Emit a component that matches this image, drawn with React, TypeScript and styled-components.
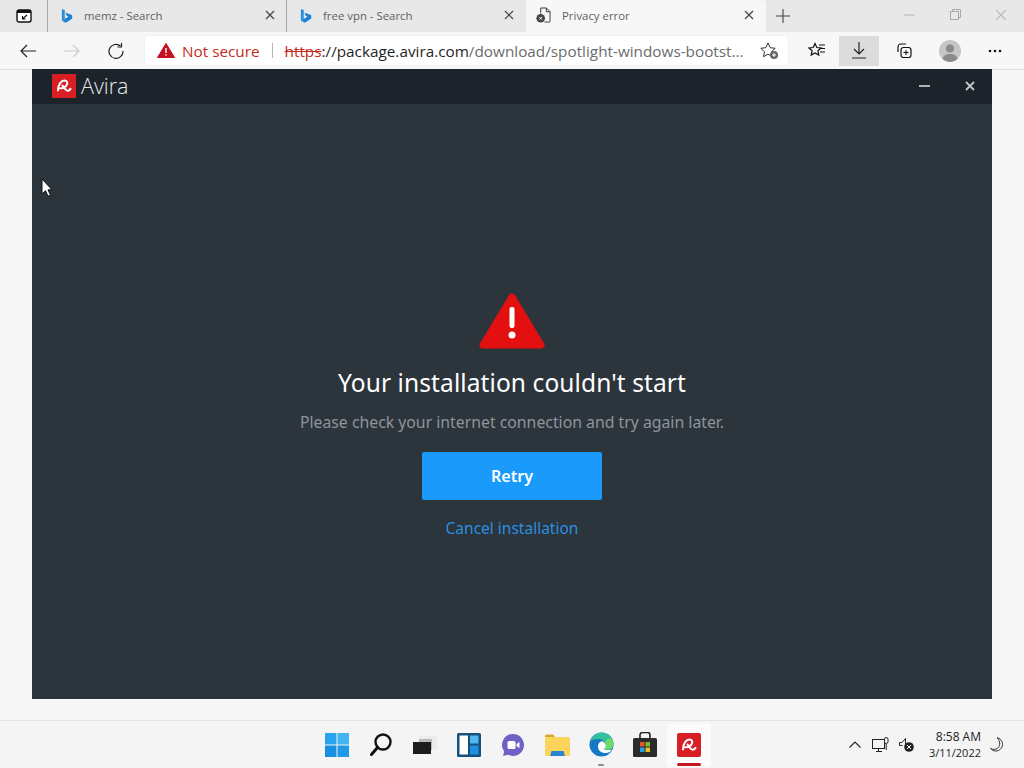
import React from "react";
import styled, { createGlobalStyle } from "styled-components";

const Global = createGlobalStyle`
  html, body { margin: 0; padding: 0; background: #f7f7f7; overflow: hidden; }
  * { box-sizing: border-box; }
`;

const Page = styled.div`
  position: relative;
  width: 1024px;
  height: 768px;
  display: flex;
  flex-direction: column;
  font-family: "Open Sans", "Liberation Sans", sans-serif;
  overflow: hidden;
`;

const TabStrip = styled.div`
  height: 32px;
  background: #e8e8e8;
  display: flex;
  align-items: stretch;
  flex-shrink: 0;
`;
const TabAction = styled.div`
  width: 47px;
  display: flex;
  align-items: center;
  padding: 0 0 1px 16px;
`;
const Tab = styled.div<{ $active?: boolean; $w: number }>`
  width: ${(p) => p.$w}px;
  display: flex;
  align-items: center;
  padding: 0 ${(p) => (p.$active ? 12 : 11)}px 2px ${(p) => (p.$active ? 10 : 13)}px;
  background: ${(p) => (p.$active ? "#f7f7f7" : "transparent")};
  border-left: 1px solid ${(p) => (p.$active ? "transparent" : "#a8a8a8")};
  background-clip: padding-box;
  border-radius: ${(p) => (p.$active ? "3px 3px 0 0" : "0")};
`;
const TabTitle = styled.span`
  flex: 1;
  margin-left: 11px;
  font-size: 11.4px;
  color: #5f5f5f;
  white-space: nowrap;
`;
const NewTab = styled.div`
  width: 34px;
  display: flex;
  align-items: center;
  justify-content: center;
  padding-bottom: 1px;
`;
const WindowControls = styled.div`
  margin-left: auto;
  display: flex;
  align-items: center;
  padding-bottom: 3px;
`;
const WindowButton = styled.div`
  width: 46px;
  display: flex;
  align-items: center;
  justify-content: center;
`;

const Toolbar = styled.div`
  height: 38px;
  background: #f7f7f7;
  display: flex;
  align-items: center;
  flex-shrink: 0;
  border-bottom: 1px solid #dedede;
  padding-left: 6px;
`;
const NavButton = styled.div<{ $w?: number; $on?: boolean }>`
  width: ${(p) => p.$w ?? 44}px;
  height: 30px;
  display: flex;
  align-items: center;
  justify-content: center;
  flex-shrink: 0;
  background: ${(p) => (p.$on ? "#dcdcdc" : "transparent")};
`;
const Address = styled.div`
  width: 643px;
  height: 29px;
  margin-left: 7px;
  margin-right: 7px;
  background: #fff;
  border-radius: 2px;
  display: flex;
  align-items: center;
  padding-left: 12px;
  font-size: 15.3px;
  white-space: nowrap;
  box-shadow: 0 0 1px #c8c8c8;
  flex-shrink: 0;
`;
const NotSecure = styled.span`
  color: #c42b1c;
  margin-left: 7px;
`;
const Divider = styled.span`
  width: 1px;
  height: 15px;
  background: #b5b5b5;
  margin: 0 12px;
`;
const Scheme = styled.span`
  color: #c42b1c;
  text-decoration: line-through;
`;
const Host = styled.span`
  color: #1f1f1f;
`;
const Path = styled.span`
  color: #6b6b6b;
  flex: 1;
`;
const AddFav = styled.div`
  width: 38px;
  display: flex;
  justify-content: center;
`;

const Content = styled.div`
  flex: 1;
  background: #f7f7f7;
  padding: 0 32px 21px;
  display: flex;
  min-height: 0;
`;
const AppWindow = styled.div`
  flex: 1;
  margin-top: -1px;
  background: #2c343c;
  display: flex;
  flex-direction: column;
  position: relative;
  z-index: 1;
  font-family: "Noto Sans", "Open Sans", sans-serif;
`;
const AppHeader = styled.div`
  height: 35px;
  background: #1c232a;
  display: flex;
  align-items: center;
  padding: 0 17px 2px 20px;
  flex-shrink: 0;
`;
const Brand = styled.span`
  color: #e8eaec;
  font-size: 21.5px;
  margin-left: 5px;
  flex: 1;
  font-family: "Open Sans", sans-serif;
  font-weight: 300;
`;
const HeaderControls = styled.div`
  display: flex;
  align-items: center;
  gap: 35px;
`;
const AppBody = styled.div`
  flex: 1;
  display: flex;
  flex-direction: column;
  align-items: center;
  padding-top: 189px;
`;
const Title = styled.h1`
  margin: 15px 0 0;
  font-size: 24.5px;
  line-height: 34px;
  font-weight: 400;
  color: #fff;
  letter-spacing: 0.1px;
`;
const Subtitle = styled.p`
  margin: 10px 0 0;
  font-size: 15.8px;
  line-height: 24px;
  color: #8f959b;
`;
const RetryButton = styled.button`
  margin-top: 18px;
  width: 180px;
  height: 48px;
  border: 0;
  border-radius: 2px;
  background: #1a9bfb;
  color: #fff;
  font: 600 16px "Noto Sans", sans-serif;
`;
const CancelLink = styled.a`
  margin-top: 16px;
  font-size: 15.5px;
  line-height: 24px;
  color: #2a8fe0;
`;

const Taskbar = styled.div`
  height: 48px;
  background: #f4f4f4;
  border-top: 1px solid #e4e4e4;
  display: grid;
  grid-template-columns: 1fr auto 1fr;
  align-items: center;
  flex-shrink: 0;
`;
const TaskIcons = styled.div`
  grid-column: 2;
  display: flex;
  padding-left: 2px;
`;
const TaskIcon = styled.div<{ $on?: boolean }>`
  width: 44px;
  height: 44px;
  display: flex;
  align-items: center;
  justify-content: center;
  position: relative;
  background: ${(p) => (p.$on ? "#fbfbfb" : "transparent")};
  border-radius: 3px;
`;
const RunningBar = styled.span`
  position: absolute;
  left: 10px;
  right: 10px;
  bottom: 1px;
  height: 3px;
  border-radius: 2px;
  background: #c4161c;
`;
const RunningDot = styled.span`
  position: absolute;
  left: 19px;
  width: 6px;
  bottom: 1px;
  height: 2px;
  border-radius: 1px;
  background: #8c8c8c;
`;
const Tray = styled.div`
  grid-column: 3;
  display: flex;
  align-items: center;
  justify-content: flex-end;
  padding-right: 20px;
`;
const TrayIcon = styled.div`
  width: 26px;
  display: flex;
  justify-content: center;
`;
const Clock = styled.div`
  text-align: right;
  line-height: 16px;
  color: #222;
  margin: 0 9px;
`;
const ClockTime = styled.div`
  font-size: 12px;
`;
const ClockDate = styled.div`
  font-size: 11px;
`;
const Cursor = styled.svg`
  position: absolute;
  left: 41px;
  top: 178px;
  z-index: 2;
`;

const Bing = () => (
  <svg width="12" height="17" viewBox="0 0 14 17">
    <path d="M1 1l3.400 1.200v10.400l4.600-2.700-2.200-1-1.400-3.500 7.600 2.700v3.800l-6 4.100-2 .9L1 14.400z" fill="#2b8fdc" />
    <path d="M4.400 12.600l4.600-2.700-2.200-1-1.400-3.500 7.600 2.700v3.800L6.600 16l-2.200-.3z" fill="#1b7ad0" opacity=".7" />
  </svg>
);
const Close = ({ s = 10, c = "#444", w = 1.2 }: { s?: number; c?: string; w?: number }) => (
  <svg width={s} height={s} viewBox="0 0 10 10">
    <path d="M1 1l8 8M9 1l-8 8" stroke={c} strokeWidth={w} fill="none" />
  </svg>
);
const AviraMark = ({ s, bar }: { s: number; bar?: boolean }) => (
  <svg width={s} height={s} viewBox="0 0 24 24">
    <rect width="24" height="24" rx={bar ? 2 : 1} fill="#d91f26" />
    <path
      d="M6 16.500C6 10 9.500 6.500 12.500 6.500c2.600 0 3.500 2.300 2.200 4.600-1.400 2.300-4.200 3.500-6.600 3.200M10.500 11.500c1.600 2.600 3.600 5.200 5.300 5.200 1.200 0 2-.7 2.700-1.800"
      stroke="#fff"
      strokeWidth="2"
      fill="none"
      strokeLinecap="round"
    />
  </svg>
);

export default function App() {
  return (
    <Page>
      <Global />
      <TabStrip>
        <TabAction>
          <svg width="16" height="14" viewBox="0 0 16 14">
            <rect x="1" y="1" width="14" height="12" rx="2" fill="#fff" stroke="#111" strokeWidth="1.4" />
            <rect x="1" y="1" width="14" height="3" fill="#111" />
            <path d="M11 6L6.500 10M6.500 7v3h3" stroke="#111" strokeWidth="1.1" fill="none" />
          </svg>
        </TabAction>
        <Tab $w={239}>
          <Bing />
          <TabTitle>memz - Search</TabTitle>
          <Close />
        </Tab>
        <Tab $w={239}>
          <Bing />
          <TabTitle>free vpn - Search</TabTitle>
          <Close />
        </Tab>
        <Tab $active $w={241}>
          <svg width="15" height="16" viewBox="0 0 16 17">
            <path d="M5 1h6l4 4v10a1 1 0 0 1-1 1H9" fill="none" stroke="#333" strokeWidth="1" />
            <path d="M5 1v6M11 1v4h4" fill="none" stroke="#333" strokeWidth="1" />
            <circle cx="5" cy="12" r="4.600" fill="#444" />
            <path d="M3.500 10.500l3 3M6.500 10.500l-3 3" stroke="#fff" strokeWidth="1" />
          </svg>
          <TabTitle>Privacy error</TabTitle>
          <Close />
        </Tab>
        <NewTab>
          <svg width="14" height="14" viewBox="0 0 14 14">
            <path d="M7 0v14M0 7h14" stroke="#444" strokeWidth="1.1" />
          </svg>
        </NewTab>
        <WindowControls>
          <WindowButton>
            <svg width="11" height="2" viewBox="0 0 11 2">
              <path d="M0 1h11" stroke="#b5b5b5" />
            </svg>
          </WindowButton>
          <WindowButton>
            <svg width="11" height="11" viewBox="0 0 11 11">
              <rect x=".5" y="2.500" width="8" height="8" fill="none" stroke="#aaa" />
              <path d="M2.500 2.500V.5h8v8H8.500" fill="none" stroke="#aaa" />
            </svg>
          </WindowButton>
          <WindowButton>
            <Close s={12} c="#b5b5b5" w={1} />
          </WindowButton>
        </WindowControls>
      </TabStrip>

      <Toolbar>
        <NavButton>
          <svg width="16" height="14" viewBox="0 0 16 14">
            <path d="M16 7H1M7 1L1 7l6 6" fill="none" stroke="#222" strokeWidth="1.2" />
          </svg>
        </NavButton>
        <NavButton>
          <svg width="16" height="14" viewBox="0 0 16 14">
            <path d="M0 7h15M9 1l6 6-6 6" fill="none" stroke="#c9c9c9" strokeWidth="1.2" />
          </svg>
        </NavButton>
        <NavButton>
          <svg width="16" height="16" viewBox="0 0 16 16">
            <path d="M12.500 3A7 7 0 1 0 15 8" fill="none" stroke="#222" strokeWidth="1.2" />
            <path d="M13.500 0v4h-4" fill="none" stroke="#222" strokeWidth="1.2" />
          </svg>
        </NavButton>
        <Address>
          <svg width="18" height="15" viewBox="0 0 18 15">
            <path d="M9 0.500L17.500 14.500H.5z" fill="#c50f1f" stroke="#c50f1f" strokeLinejoin="round" />
            <path d="M9 5v5M9 11.200v1.600" stroke="#fff" strokeWidth="1.400" />
          </svg>
          <NotSecure>Not secure</NotSecure>
          <Divider />
          <Scheme>https</Scheme>
          <Host>://package.avira.com</Host>
          <Path>/download/spotlight-windows-bootst...</Path>
          <AddFav>
            <svg width="19" height="18" viewBox="0 0 19 18">
              <path d="M8 1l2.200 4.700 5 .6-3.700 3.400 1 5-4.500-2.500-4.500 2.500 1-5L.8 6.300l5-.6z" fill="none" stroke="#333" strokeWidth="1" />
              <circle cx="14" cy="13" r="4" fill="#666" />
              <path d="M14 11v4M12 13h4" stroke="#fff" />
            </svg>
          </AddFav>
        </Address>
        <NavButton>
          <svg width="18" height="17" viewBox="0 0 18 17">
            <path d="M7 1.500l1.800 4 4.200.5-3.100 2.800.9 4.200L7 10.900 3.200 13l.9-4.200L1 6l4.200-.5z" fill="none" stroke="#111" strokeWidth="1.200" />
            <path d="M11 3h6M13 6.500h4M12 10h5" stroke="#111" strokeWidth="1.100" />
          </svg>
        </NavButton>
        <NavButton $w={40} $on>
          <svg width="14" height="17" viewBox="0 0 14 17">
            <path d="M7 0v12M2 7l5 5 5-5M0 16h14" fill="none" stroke="#222" strokeWidth="1.200" />
          </svg>
        </NavButton>
        <NavButton $w={49}>
          <svg width="17" height="17" viewBox="0 0 17 17">
            <path d="M3 10V5a3 3 0 0 1 3-3h5" fill="none" stroke="#111" strokeWidth="1.200" />
            <rect x="6" y="5.500" width="10" height="10" rx="2.500" fill="none" stroke="#111" strokeWidth="1.200" />
            <path d="M11 8v5M8.500 10.500h5" stroke="#111" />
          </svg>
        </NavButton>
        <NavButton>
          <svg width="22" height="22" viewBox="0 0 22 22">
            <circle cx="11" cy="11" r="11" fill="#c6c6c6" />
            <circle cx="11" cy="8.500" r="4" fill="#8a8a8a" />
            <path d="M3.500 19c1-4 4-5 7.500-5s6.500 1 7.500 5a11 11 0 0 1-15 0z" fill="#8a8a8a" />
          </svg>
        </NavButton>
        <NavButton $w={46}>
          <svg width="14" height="4" viewBox="0 0 14 4">
            <circle cx="2" cy="2" r="1.300" fill="#111" />
            <circle cx="7" cy="2" r="1.300" fill="#111" />
            <circle cx="12" cy="2" r="1.300" fill="#111" />
          </svg>
        </NavButton>
      </Toolbar>

      <Content>
        <AppWindow>
          <AppHeader>
            <AviraMark s={24} />
            <Brand>Avira</Brand>
            <HeaderControls>
              <svg width="11" height="2" viewBox="0 0 11 2">
                <rect width="11" height="2" fill="#aeb3b8" />
              </svg>
              <Close s={10} c="#c4c8cc" w={1.800} />
            </HeaderControls>
          </AppHeader>
          <AppBody>
            <svg width="66" height="58" viewBox="0 0 66 58">
              <path d="M33 4L62 52H4z" fill="#e2100f" stroke="#e2100f" strokeWidth="7" strokeLinejoin="round" />
              <rect x="30.500" y="14" width="5" height="21" rx="2" fill="#fff" />
              <circle cx="33" cy="42" r="3.500" fill="#fff" />
            </svg>
            <Title>Your installation couldn't start</Title>
            <Subtitle>Please check your internet connection and try again later.</Subtitle>
            <RetryButton>Retry</RetryButton>
            <CancelLink>Cancel installation</CancelLink>
          </AppBody>
        </AppWindow>
      </Content>

      <Taskbar>
        <TaskIcons>
          <TaskIcon>
            <svg width="24" height="24" viewBox="0 0 24 24">
              <rect width="11.500" height="11.500" fill="#29a3ec" />
              <rect x="12.500" width="11.500" height="11.500" fill="#3fb6f2" />
              <rect y="12.500" width="11.500" height="11.500" fill="#1a8fdf" />
              <rect x="12.500" y="12.500" width="11.500" height="11.500" fill="#1f9ae6" />
            </svg>
          </TaskIcon>
          <TaskIcon>
            <svg width="22" height="23" viewBox="0 0 22 23">
              <circle cx="13" cy="9" r="7.500" fill="none" stroke="#111" strokeWidth="2.400" />
              <path d="M7.500 14.500L1.500 21.500" stroke="#111" strokeWidth="3" strokeLinecap="round" />
            </svg>
          </TaskIcon>
          <TaskIcon>
            <svg width="24" height="20" viewBox="0 0 24 20">
              <rect x="6" y="1" width="18" height="13" fill="#ececec" />
              <rect x="6" y="4" width="13" height="11" fill="#b9b9b9" />
              <rect y="7" width="18" height="12" fill="#1c1c1c" />
            </svg>
          </TaskIcon>
          <TaskIcon>
            <svg width="24" height="24" viewBox="0 0 24 24">
              <rect width="24" height="24" rx="1.500" fill="#14517f" />
              <rect x="2.500" y="2.500" width="8.500" height="19" fill="#fff" />
              <rect x="13" y="2.500" width="8.500" height="8" fill="#56b7f0" />
              <rect x="13" y="12.500" width="8.500" height="9" fill="#1e90e0" />
            </svg>
          </TaskIcon>
          <TaskIcon>
            <svg width="24" height="24" viewBox="0 0 24 24">
              <path d="M12 1a11 11 0 1 1-5 20.800L2 23l1.200-4.500A11 11 0 0 1 12 1z" fill="#6e62c4" />
              <rect x="6.500" y="8" width="8" height="8" rx="1.500" fill="#fff" />
              <path d="M15.500 11l3-2v6l-3-2z" fill="#fff" />
            </svg>
          </TaskIcon>
          <TaskIcon>
            <svg width="25" height="22" viewBox="0 0 25 22">
              <path d="M0 2a1.500 1.500 0 0 1 1.500-1.500H8l2 2.500h-10z" fill="#d9a52c" />
              <rect y="3" width="25" height="19" rx="1.500" fill="#fbd55b" />
              <path d="M5 22l1.500-5h12l1.500 5z" fill="#2b84d0" />
            </svg>
          </TaskIcon>
          <TaskIcon>
            <svg width="25" height="25" viewBox="0 0 25 25">
              <circle cx="12.500" cy="12.500" r="12" fill="#1478c4" />
              <path d="M1 9.500C3 3.500 8 .5 12.500.5c7 0 12 5.500 12 11.500 0 3.500-2.500 5.500-5.500 5.500-2 0-3.500-.6-4.200-1.300 2-1 2.500-3.200 1.500-5C15 8.500 12.500 7 9.500 7 6 7 3 7.800 1 9.500z" fill="#35c1a0" />
              <path d="M24.500 12c0 3.500-2.500 5.500-5.500 5.500-2 0-3.500-.6-4.200-1.300 2-1 2.500-3.200 1.500-5C15.500 9 20 5 22 6.500c1.500 1.500 2.500 3.500 2.500 5.500z" fill="#6fdc6a" />
              <path d="M9 14.500c0 4 3 6.500 7.500 6.500 1.600 0 3-.3 4.300-1a12 12 0 0 0 2-2.600c-1.200.5-2.500.6-3.800.6-2 0-3.500-.6-4.200-1.300 2-1 2.500-3.200 1.500-5-.6-1.200-1.900-2.200-3.300-2.500C10.500 9.500 9 12 9 14.500z" fill="#fff" />
            </svg>
            <RunningDot />
          </TaskIcon>
          <TaskIcon>
            <svg width="24" height="25" viewBox="0 0 24 25">
              <path d="M7 7V3a2.500 2.500 0 0 1 2.500-2.500h5A2.500 2.500 0 0 1 17 3v4" fill="none" stroke="#222" strokeWidth="1.600" />
              <rect y="6" width="24" height="19" rx="1.500" fill="#2b2b2b" />
              <rect x="7" y="10" width="4.500" height="4.500" fill="#e8562a" />
              <rect x="12.500" y="10" width="4.500" height="4.500" fill="#7fba2a" />
              <rect x="7" y="15.500" width="4.500" height="4.500" fill="#1fa2e8" />
              <rect x="12.500" y="15.500" width="4.500" height="4.500" fill="#f4bb1a" />
            </svg>
          </TaskIcon>
          <TaskIcon $on>
            <AviraMark s={24} bar />
            <RunningBar />
          </TaskIcon>
        </TaskIcons>
        <Tray>
          <TrayIcon>
            <svg width="12" height="7" viewBox="0 0 12 7">
              <path d="M.5 6.500L6 1l5.500 5.500" fill="none" stroke="#222" strokeWidth="1.100" />
            </svg>
          </TrayIcon>
          <TrayIcon>
            <svg width="17" height="16" viewBox="0 0 17 16">
              <rect x=".5" y="2.500" width="12" height="9" fill="none" stroke="#222" />
              <path d="M4 14.500h6M6.500 12v2" stroke="#222" />
              <rect x="12.500" y=".5" width="3.500" height="6" rx="1.700" fill="#f4f4f4" stroke="#222" />
              <path d="M14.200 7v6" stroke="#222" />
            </svg>
          </TrayIcon>
          <TrayIcon>
            <svg width="15" height="15" viewBox="0 0 15 15">
              <path d="M.5 5.500h2.500L6.500 1.500v8" fill="none" stroke="#222" />
              <path d="M.5 5.500v3h3" fill="none" stroke="#222" />
              <circle cx="10" cy="10" r="4.800" fill="#222" />
              <path d="M8 8l4 4M12 8l-4 4" stroke="#fff" />
            </svg>
          </TrayIcon>
          <Clock>
            <ClockTime>8:58 AM</ClockTime>
            <ClockDate>3/11/2022</ClockDate>
          </Clock>
          <svg width="14" height="15" viewBox="0 0 14 15">
            <path d="M7 .7c2.500 2 3.500 6 2 9-.8 1.500-2.500 2.500-4.500 2.700-1.500.1-3-.2-4-1 1.500 2 4 3 6.500 2.500 3.500-.7 6-4 5.500-7.500C12.100 3.700 10 1 7 .7z" fill="#f4f4f4" stroke="#333" />
          </svg>
        </Tray>
      </Taskbar>

      <Cursor width="12" height="20" viewBox="0 0 12 20">
        <path d="M1 1v15l3.500-3.300 2.500 5.500 2.500-1-2.500-5.400H11z" fill="#fff" stroke="#111" strokeWidth="1" />
      </Cursor>
    </Page>
  );
}
